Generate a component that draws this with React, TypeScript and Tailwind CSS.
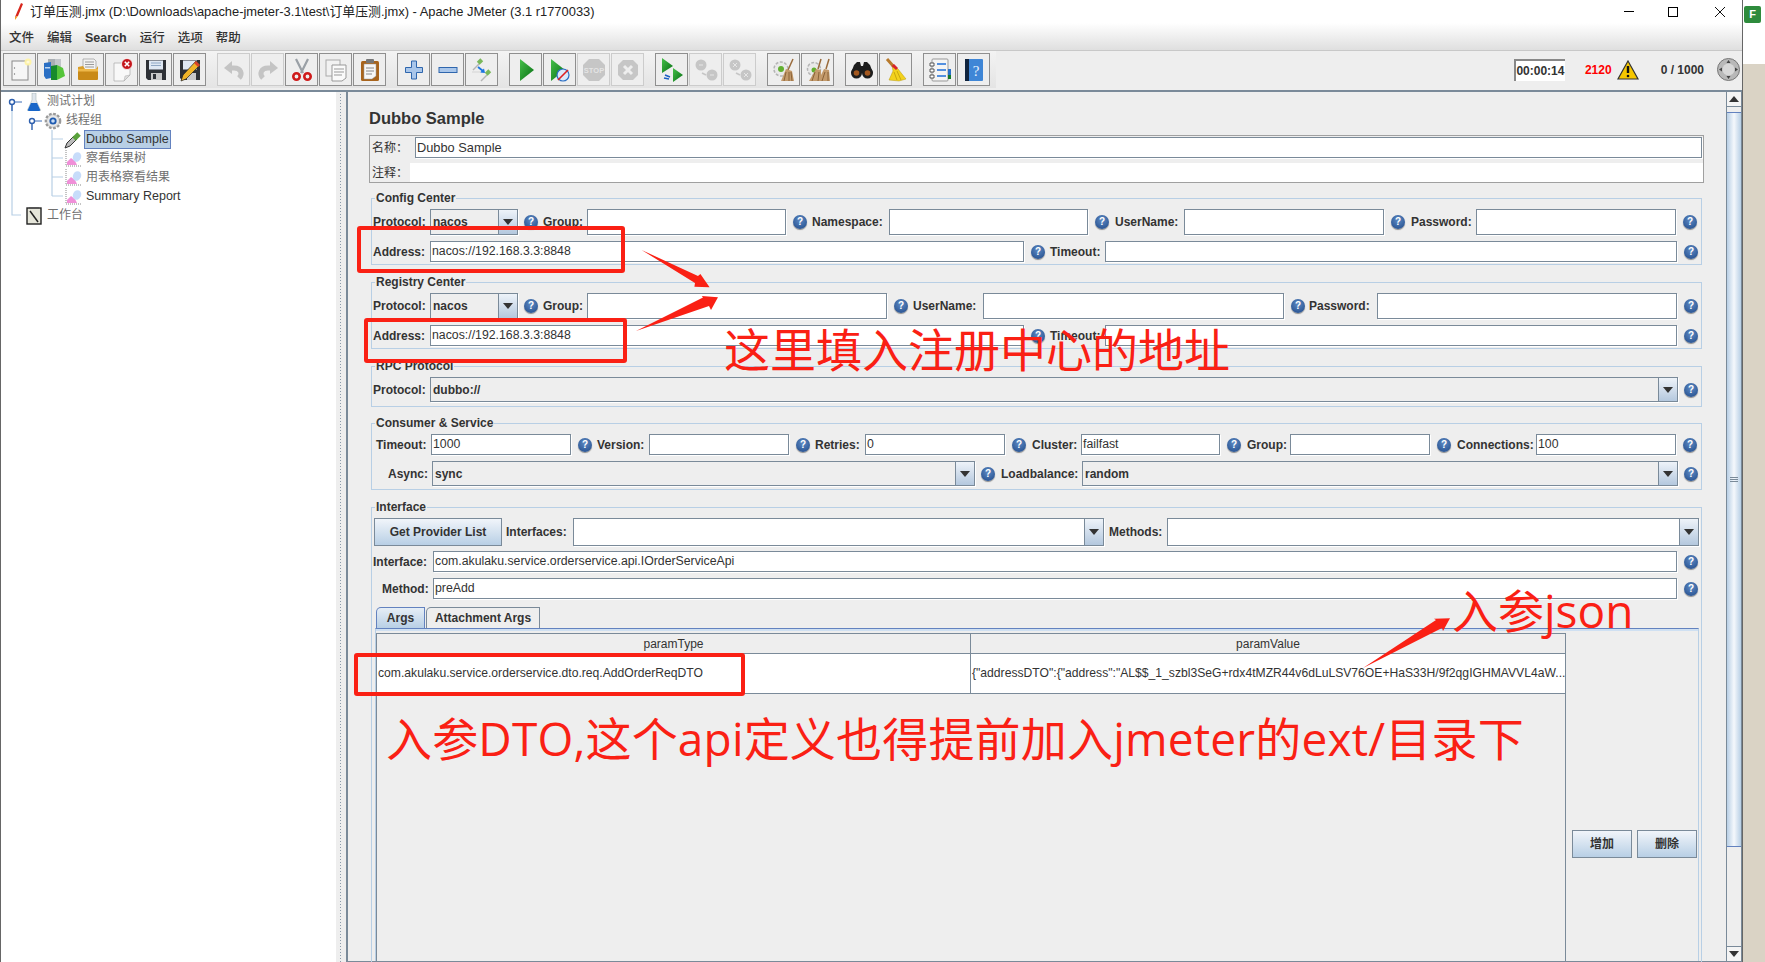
import React from "react";

const Tri = ({ up }: { up?: boolean }) => (
  <svg width="10" height="6" viewBox="0 0 10 6">
    <polygon points={up ? "0,6 10,6 5,0" : "0,0 10,0 5,6"} fill="#333" />
  </svg>
);

const Help = ({ className = "" }: { className?: string }) => (
  <span className={`flex h-[14px] w-[14px] shrink-0 items-center justify-center self-center rounded-full bg-[radial-gradient(circle_at_50%_35%,#5f8bc4,#1d4787)] text-[10px] font-bold leading-none text-white shadow-[0_1px_1px_#888] ${className}`}>
    ?
  </span>
);

const Label = ({ className = "", children }: { className?: string; children: React.ReactNode }) => (
  <span className={`shrink-0 self-center whitespace-nowrap text-[12px] font-bold text-[#333] ${className}`}>{children}</span>
);

const Field = ({ className = "", value = "" }: { className?: string; value?: string }) => (
  <div className={`flex shrink-0 items-center overflow-hidden border border-[#7a8a99] bg-white pl-[1px] text-[12.300px] text-[#333] shadow-[1px_1px_0_#fff] ${className}`}>
    {value}
  </div>
);

const Combo = ({ className = "", value = "", white }: { className?: string; value?: string; white?: boolean }) => (
  <div className={`flex shrink-0 border border-[#7a8a99] shadow-[1px_1px_0_#fff] ${white ? "bg-white" : "bg-[#eeeeee]"} ${className}`}>
    <span className="flex flex-1 items-center pl-[2px] text-[12px] font-bold text-[#333]">{value}</span>
    <span className="flex w-[19px] items-center justify-center border-l border-[#7a8a99] bg-gradient-to-b from-[#eef3f9] to-[#b4c8de]">
      <Tri />
    </span>
  </div>
);

const Group = ({ title, className = "", children }: { title: string; className?: string; children: React.ReactNode }) => (
  <div className={`relative ml-[2px] w-[1331px] border border-[#b8cfe5] ${className}`}>
    <span className="absolute -top-[8px] left-[3px] bg-[#eeeeee] px-[1px] text-[12px] font-bold leading-[14px] text-[#333]">{title}</span>
    {children}
  </div>
);

const Btn = ({ off, children }: { off?: boolean; children: React.ReactNode }) => (
  <div className={`flex h-[33px] w-[33px] items-center justify-center border bg-[#eeeeee] ${off ? "border-[#cccccc]" : "border-[#8f8f8f]"}`}>
    {children}
  </div>
);

const I = ({ children, s = 24 }: { children: React.ReactNode; s?: number }) => (
  <svg width={s} height={s} viewBox="0 0 24 24">{children}</svg>
);

const icons = {
  file: (
    <I>
      <rect x="4" y="3" width="16" height="19" fill="#f6f6f6" stroke="#8a8a8a" />
      <circle cx="20" cy="4" r="3.5" fill="#fff3a0" opacity="0.9" />
      <circle cx="20" cy="4" r="1.6" fill="#fff9d8" />
      <circle cx="6.5" cy="10" r="0.7" fill="#777" />
      <circle cx="6.5" cy="16" r="0.7" fill="#777" />
    </I>
  ),
  templates: (
    <I>
      <rect x="6" y="1" width="7" height="9" fill="#a9aeb3" />
      <rect x="13" y="1" width="6" height="9" fill="#c2c6ca" />
      <polygon points="2,5 9,4 9,20 4,21 2,18" fill="#2a6fc4" />
      <rect x="3" y="9" width="5" height="1.5" fill="#bcd6f2" />
      <polygon points="9,8 15,7 15,22 9,22" fill="#178a2c" />
      <polygon points="15,7 21,10 23,18 15,22" fill="#55c53a" />
    </I>
  ),
  open: (
    <I>
      <polygon points="7,1 18,1 20,3 20,14 7,14" fill="#f2f2f2" stroke="#999" strokeWidth="0.7" />
      <path d="M9 4h9M9 6.5h9M9 9h9" stroke="#9a9a9a" />
      <path d="M2 9l5-1 2 3h11l2-3v12a1 1 0 0 1-1 1H3a1 1 0 0 1-1-1z" fill="#d99f2b" />
      <path d="M2 13h20v8a1 1 0 0 1-1 1H3a1 1 0 0 1-1-1z" fill="#c98a18" />
      <rect x="2" y="11" width="20" height="2.5" fill="#eeb84a" />
    </I>
  ),
  close: (
    <I>
      <polygon points="4,5 20,5 20,17 14,23 4,23" fill="#f8f8f8" stroke="#aaa" strokeWidth="0.7" />
      <polygon points="14,23 15,18 20,17" fill="#ddd" stroke="#aaa" strokeWidth="0.5" />
      <circle cx="17" cy="6" r="5.5" fill="#c4161c" stroke="#fff" strokeWidth="0.8" />
      <path d="M14.8 3.8l4.4 4.4M19.2 3.8l-4.4 4.4" stroke="#fff" strokeWidth="1.6" />
    </I>
  ),
  save: (
    <I>
      <path d="M2 2h20v20H4l-2-2z" fill="#2e3136" />
      <rect x="5" y="2.5" width="14" height="9" fill="#dfe8f3" />
      <path d="M7 5h10M7 7.5h10" stroke="#8fa7c4" />
      <rect x="7" y="15" width="11" height="7" fill="#c8c8c8" />
      <rect x="9" y="16" width="3" height="5" fill="#2e3136" />
    </I>
  ),
  saveAs: (
    <I>
      <path d="M2 2h20v20H4l-2-2z" fill="#2e3136" />
      <rect x="5" y="2.5" width="14" height="9" fill="#dfe8f3" />
      <rect x="9" y="15" width="9" height="7" fill="#c8c8c8" />
      <polygon points="3,23 5,17 18,3 22,7 8,21" fill="#f0b429" stroke="#222" strokeWidth="0.7" />
      <polygon points="18,3 22,7 20,9 16,5" fill="#d8432a" />
    </I>
  ),
  undo: (
    <I>
      <path d="M17 20c4-4 2-10-5-10H8" fill="none" stroke="#c4c4c4" strokeWidth="5" />
      <polygon points="10,3 2,10 10,16" fill="#c4c4c4" />
    </I>
  ),
  redo: (
    <I>
      <path d="M7 20c-4-4-2-10 5-10h4" fill="none" stroke="#c4c4c4" strokeWidth="5" />
      <polygon points="14,3 22,10 14,16" fill="#c4c4c4" />
    </I>
  ),
  cut: (
    <I>
      <path d="M6 1l7 14M18 1l-7 14" stroke="#9aa0a6" strokeWidth="2.2" fill="none" />
      <circle cx="6.5" cy="18.500" r="3.2" fill="none" stroke="#cf1a1a" strokeWidth="2.6" />
      <circle cx="17.5" cy="18.500" r="3.2" fill="none" stroke="#cf1a1a" strokeWidth="2.6" />
    </I>
  ),
  copy: (
    <I>
      <rect x="2" y="2" width="14" height="16" fill="#f2f2f2" stroke="#aaa" />
      <polygon points="8,7 22,7 22,20 18,23 8,23" fill="#fafafa" stroke="#999" />
      <path d="M10 11h10M10 14h10M10 17h8" stroke="#999" />
    </I>
  ),
  paste: (
    <I>
      <rect x="3" y="3" width="18" height="20" rx="1.5" fill="#a8641c" />
      <polygon points="6,6 18,6 18,18 14,21 6,21" fill="#f7f7f7" stroke="#999" strokeWidth="0.5" />
      <rect x="8" y="1" width="8" height="4" rx="1" fill="#777" />
      <path d="M8 10h8M8 13h8M8 16h6" stroke="#888" />
    </I>
  ),
  plus: (
    <I>
      <path d="M9.5 3h5v6.500h6v5h-6V21h-5v-6.500h-6v-5h6z" fill="#a9c6ea" stroke="#2f66ad" strokeWidth="1" />
    </I>
  ),
  minus: (
    <I>
      <rect x="3" y="9.500" width="18" height="5" fill="#a9c6ea" stroke="#2f66ad" />
    </I>
  ),
  toggle: (
    <I>
      <path d="M3 12L9 6" stroke="#b5b5b5" strokeWidth="1.500" />
      <rect x="8" y="1" width="4" height="5" fill="#7ab85c" transform="rotate(45 10 3.500)" />
      <path d="M11 23l6-6" stroke="#b5b5b5" strokeWidth="1.500" />
      <rect x="16" y="12" width="4" height="5" fill="#7ab85c" transform="rotate(45 18 14.500)" />
      <path d="M8 9l5 4" stroke="#1b74e0" strokeWidth="1.800" />
      <polygon points="15,15 10,14.500 14,10.500" fill="#1b74e0" />
      <path d="M2 14h9" stroke="#d4d4d4" />
    </I>
  ),
  play: (
    <I>
      <defs>
        <linearGradient id="pg" x1="0" y1="0" x2="1" y2="1">
          <stop offset="0" stopColor="#46c04a" />
          <stop offset="1" stopColor="#066d12" />
        </linearGradient>
      </defs>
      <polygon points="6,1 20,12 6,23" fill="url(#pg)" />
    </I>
  ),
  playNo: (
    <I>
      <polygon points="3,1 17,12 3,23" fill="url(#pg)" />
      <circle cx="15" cy="17" r="6" fill="#dbe8f8" stroke="#2a6fc4" strokeWidth="1.2" />
      <path d="M10 22L20 12" stroke="#e02020" strokeWidth="1.6" />
    </I>
  ),
  stop: (
    <I>
      <polygon points="7,1 17,1 23,7 23,17 17,23 7,23 1,17 1,7" fill="#c6c6c6" />
      <text x="12" y="15" textAnchor="middle" fontSize="7.500" fontWeight="700" fill="#e4e4e4" fontFamily="Liberation Sans">STOP</text>
    </I>
  ),
  down: (
    <I>
      <polygon points="7,2 17,2 22,7 22,17 17,22 7,22 2,17 2,7" fill="#c6c6c6" />
      <path d="M8 8l8 8M16 8l-8 8" stroke="#eeeeee" strokeWidth="3" />
    </I>
  ),
  remote: (
    <I>
      <polygon points="2,0 13,8 2,15" fill="url(#pg)" />
      <polygon points="13,10 23,17 13,24" fill="url(#pg)" />
      <path d="M5 17l5 2M9 21l-5-1" stroke="#1b5fc4" strokeWidth="1.6" />
    </I>
  ),
  remoteStop: (
    <I>
      <circle cx="7" cy="7" r="5.500" fill="#c6c6c6" />
      <circle cx="18" cy="17" r="5.500" fill="#c6c6c6" />
      <path d="M8 15l4 2" stroke="#c6c6c6" strokeWidth="1.600" />
      <path d="M5 7h4M16 17h4" stroke="#e6e6e6" />
    </I>
  ),
  remoteDown: (
    <I>
      <circle cx="7" cy="7" r="5.500" fill="#c6c6c6" />
      <circle cx="18" cy="17" r="5.500" fill="#c6c6c6" />
      <path d="M8 15l4 2" stroke="#c6c6c6" strokeWidth="1.600" />
      <path d="M5 5l4 4M9 5l-4 4M16 15l4 4M20 15l-4 4" stroke="#e6e6e6" />
    </I>
  ),
  clear: (
    <I>
      <circle cx="9" cy="11" r="7" fill="#e9e9e9" stroke="#b5b5b5" strokeWidth="1.500" strokeDasharray="3 1.500" />
      <circle cx="9" cy="11" r="3" fill="#62b030" />
      <path d="M21 1l-5 11" stroke="#9a6b3c" strokeWidth="1.500" />
      <polygon points="14,11 20,13 22,23 9,23" fill="#c39a6b" />
      <path d="M14 14l-2 9M17 14l0 9M19 14l1 9" stroke="#8a6238" />
    </I>
  ),
  clearAll: (
    <I>
      <circle cx="8" cy="11" r="6.500" fill="#e9e9e9" stroke="#b5b5b5" strokeWidth="1.500" strokeDasharray="3 1.500" />
      <circle cx="8" cy="12" r="2.500" fill="#62b030" />
      <path d="M15 1l-3 10M23 1l-3 10" stroke="#9a6b3c" strokeWidth="1.500" />
      <polygon points="10,11 15,12 15,23 3,23" fill="#c39a6b" />
      <polygon points="18,11 23,12 24,23 12,23" fill="#c39a6b" />
      <path d="M9 14l-3 9M13 14l-1 9M19 14l-3 9M22 14l0 9" stroke="#8a6238" />
    </I>
  ),
  search: (
    <I>
      <path d="M4 7l3-3h3l1 4h2l1-4h3l3 3 3 8H1z" fill="#1e1e1e" />
      <circle cx="6.500" cy="15" r="5.500" fill="#1e1e1e" />
      <circle cx="17.500" cy="15" r="5.500" fill="#1e1e1e" />
      <circle cx="6.500" cy="15" r="2.800" fill="#a4581f" />
      <circle cx="17.500" cy="15" r="2.800" fill="#a4581f" />
    </I>
  ),
  broom: (
    <I>
      <path d="M3 1l7 8" stroke="#b87a2c" strokeWidth="3" />
      <polygon points="8,7 14,11 22,21 15,23 5,22 9,13" fill="#f3d21c" stroke="#b99a10" strokeWidth="0.500" />
      <polygon points="7.500,8 10,6 14,10 12,12" fill="#d8242a" />
      <path d="M10 14l3 8M13 13l4 9" stroke="#c9a80e" />
    </I>
  ),
  fnList: (
    <I>
      <rect x="4" y="1" width="16" height="22" rx="1" fill="#f4f4f4" stroke="#999" />
      <path d="M9 6h9M9 12h9M9 18h9" stroke="#1f6fd8" strokeWidth="1.300" />
      <path d="M2 5h4v3H2zM2 11h4v3H2zM2 17h4v3H2z" fill="#fff" stroke="#333" strokeWidth="0.800" />
      <rect x="20" y="11" width="3" height="6" fill="#2a70c8" />
      <rect x="20" y="17" width="3" height="4" fill="#157a2a" />
    </I>
  ),
  book: (
    <I>
      <rect x="3" y="1" width="18" height="22" rx="1" fill="#3f86d6" />
      <rect x="3" y="1" width="4" height="22" fill="#10243e" />
      <text x="14" y="18" textAnchor="middle" fontSize="15" fill="#e8f2ff" fontFamily="Liberation Serif">?</text>
    </I>
  ),
};

const toolbar: { off?: boolean; icon: keyof typeof icons }[][] = [
  [{ icon: "file" }, { icon: "templates" }, { icon: "open" }, { icon: "close" }, { icon: "save" }, { icon: "saveAs" }],
  [{ icon: "undo", off: true }, { icon: "redo", off: true }, { icon: "cut" }, { icon: "copy" }, { icon: "paste" }],
  [{ icon: "plus" }, { icon: "minus" }, { icon: "toggle" }],
  [{ icon: "play" }, { icon: "playNo" }, { icon: "stop", off: true }, { icon: "down", off: true }],
  [{ icon: "remote" }, { icon: "remoteStop", off: true }, { icon: "remoteDown", off: true }],
  [{ icon: "clear" }, { icon: "clearAll" }],
  [{ icon: "search" }, { icon: "broom" }],
  [{ icon: "fnList" }, { icon: "book" }],
];

const Flask = () => (
  <svg width="16" height="18" viewBox="0 0 16 18">
    <path d="M6 0h4v7l4 9a1 1 0 0 1-1 2H3a1 1 0 0 1-1-2l4-9z" fill="#dfe6ee" stroke="#9aa" strokeWidth="0.500" />
    <path d="M5 10h6l3 6.500a1 1 0 0 1-1 1.500H3a1 1 0 0 1-1-1.500z" fill="#1866c9" />
  </svg>
);

const Gear = () => (
  <svg width="20" height="20" viewBox="0 0 20 20">
    <circle cx="10" cy="10" r="8" fill="#d8d8d8" stroke="#9a9a9a" strokeWidth="2.500" strokeDasharray="3 1.700" />
    <circle cx="10" cy="10" r="6" fill="#e8e8e8" />
    <circle cx="10" cy="10" r="4" fill="#1f5bb0" />
    <circle cx="10" cy="10" r="2" fill="#c7dcf5" />
  </svg>
);

const Pipette = () => (
  <svg width="18" height="18" viewBox="0 0 18 18">
    <path d="M1 17l2-5 7-7 3 3-7 7z" fill="#bbb" stroke="#333" />
    <path d="M10 8l5-5" stroke="#5aa23c" strokeWidth="5" />
  </svg>
);

const Graph = () => (
  <svg width="17" height="17" viewBox="0 0 17 17">
    <path d="M1 0v16h16" fill="none" stroke="#888" strokeDasharray="1 1" />
    <path d="M2 15l0-3 4-4 4 3 2 4z" fill="#f08fd8" />
    <ellipse cx="12" cy="7" rx="4" ry="5" fill="#c7dcfa" transform="rotate(25 12 7)" />
  </svg>
);

const Note = () => (
  <svg width="18" height="18" viewBox="0 0 18 18">
    <rect x="2" y="1" width="14" height="16" fill="#e6e6da" stroke="#222" strokeWidth="1.400" />
    <path d="M5 4l8 11" stroke="#222" strokeWidth="1.500" />
    <path d="M4 1h10" stroke="#555" strokeWidth="2" />
  </svg>
);

const TreeRow = ({ pad, icon, text, size = "text-[12px]", color = "text-[#707070]", selected }: { pad: string; icon: React.ReactNode; text: string; size?: string; color?: string; selected?: boolean }) => (
  <div className={`flex h-[19px] items-center ${pad}`}>
    <span className="mr-[2px] flex w-[18px] justify-center">{icon}</span>
    <span className={`whitespace-nowrap leading-[17px] ${size} ${color} ${selected ? "border border-[#6382bf] bg-[#b8cfe5] px-[1px]" : "pl-[2px]"}`}>{text}</span>
  </div>
);

const Annotations = () => (
  <>
    <div className="absolute left-[357px] top-[226px] h-[47px] w-[268px] rounded-[3px] border-[4px] border-[#fa2014]" />
    <div className="absolute left-[364px] top-[318px] h-[45px] w-[263px] rounded-[3px] border-[4px] border-[#fa2014]" />
    <div className="absolute left-[354px] top-[653px] h-[43px] w-[391px] rounded-[3px] border-[4px] border-[#fa2014]" />
    <svg className="absolute left-0 top-0" width="1765" height="962">
      <polygon points="641.600,250 698,276 700.400,274 709.600,287.300 694.400,286.700 695,283" fill="#fa2014" />
      <polygon points="636,331 703,297.500 701.800,296 718,297.300 711,310 709,306" fill="#fa2014" />
      <polygon points="1363,668 1436,620 1434,618.700 1450,618.300 1443,631 1442,628" fill="#fa2014" />
    </svg>
    <span className="absolute left-[724px] top-[318px] whitespace-nowrap text-[46px] leading-[66px] text-[#fa2014]">这里填入注册中心的地址</span>
    <span className="absolute left-[386px] top-[705px] whitespace-nowrap font-['Open_Sans','Noto_Sans_CJK_SC',sans-serif] text-[46px] leading-[66px] tracking-[0.18px] text-[#fa2014]">入参DTO,这个api定义也得提前加入jmeter的ext/目录下</span>
    <span className="absolute left-[1452px] top-[577px] whitespace-nowrap font-['Open_Sans','Noto_Sans_CJK_SC',sans-serif] text-[46px] leading-[66px] text-[#fa2014]">入参json</span>
  </>
);

export default function App() {
  return (
    <div className="relative flex h-[962px] w-[1765px] overflow-hidden bg-white font-['Liberation_Sans','Noto_Sans_CJK_SC',sans-serif]">
      <div className="flex h-full w-[1743px] flex-col border-x border-[#666]">
        {/* title */}
        <div className="flex h-[23px] shrink-0 items-center bg-white pl-[11px] text-[12.900px] text-[#222]">
          <svg width="12" height="18" viewBox="0 0 12 18" className="mr-[6px]">
            <path d="M9 0l2 1-5 12-3 1z" fill="#d8261c" />
            <path d="M3 14l3-1-3 4z" fill="#f0a020" />
          </svg>
          <span>订单压测.jmx (D:\Downloads\apache-jmeter-3.1\test\订单压测.jmx) - Apache JMeter (3.1 r1770033)</span>
          <div className="ml-auto flex items-center">
            <span className="mr-[34px] h-[1px] w-[10px] bg-black" />
            <span className="mr-[36px] h-[10px] w-[10px] border border-black" />
            <svg width="12" height="12" viewBox="0 0 12 12" className="mr-[16px]">
              <path d="M1 1l10 10M11 1L1 11" stroke="#111" />
            </svg>
          </div>
        </div>
        {/* menu */}
        <div className="flex h-[28px] shrink-0 items-center gap-[13px] border-b border-[#c8c8c8] bg-gradient-to-b from-white to-[#dfdfdf] pl-[8px] pt-[3px] text-[12.500px] font-medium text-[#333]">
          <span>文件</span>
          <span>编辑</span>
          <span className="font-bold">Search</span>
          <span>运行</span>
          <span>选项</span>
          <span>帮助</span>
        </div>
        {/* toolbar */}
        <div className="flex h-[41px] shrink-0 items-center border-b-2 border-[#7a8a99] bg-[#eeeeee] pb-[2px] pl-[2px]">
          <div className="flex h-[37px] items-center gap-[11px] bg-gradient-to-b from-[#f3f3f3] to-[#e4e4e4] pr-[6px]">
            {toolbar.map((g, i) => (
              <div key={i} className="flex gap-[1px]">
                {g.map(b => (
                  <Btn key={b.icon} off={b.off}>{icons[b.icon]}</Btn>
                ))}
              </div>
            ))}
          </div>
          <div className="ml-auto flex items-center text-[12px] font-bold text-[#333]">
            <span className="mr-[20px] flex h-[22px] w-[51px] items-center justify-center border-l-2 border-t-2 border-[#888] bg-white">00:00:14</span>
            <span className="mr-[5px] text-[#ff0000]">2120</span>
            <svg width="22" height="20" viewBox="0 0 22 20" className="mr-[22px]">
              <polygon points="11,1 21,19 1,19" fill="#f6c700" stroke="#333" strokeWidth="1.200" />
              <path d="M11 6v7" stroke="#111" strokeWidth="2.400" />
              <circle cx="11" cy="16" r="1.300" fill="#111" />
            </svg>
            <span className="mr-[13px]">0 / 1000</span>
            <svg width="23" height="23" viewBox="0 0 23 23" className="mr-[2px]">
              <circle cx="11.500" cy="11.500" r="11" fill="#b8b8b8" stroke="#777" />
              <circle cx="11.500" cy="11.500" r="6" fill="#d8d8d8" />
              <path d="M11.500 2l2 3h-4zM11.500 21l2-3h-4zM2 11.500l3-2v4zM21 11.500l-3-2v4z" fill="#444" />
            </svg>
          </div>
        </div>
        <div className="flex min-h-0 flex-1">
          {/* tree */}
          <div className="relative w-[335px] shrink-0 bg-white pl-[1px]">
            <svg className="absolute left-0 top-0" width="70" height="130">
              <path d="M11 10v113h9M51 38v66M51 47h11M51 66h11M51 85h11M51 104h11" fill="none" stroke="#b8cfe5" strokeWidth="1.200" />
              <path d="M11 10h10M31 29h10" stroke="#3d6cb5" />
              <circle cx="11" cy="10" r="2.500" fill="#fff" stroke="#2d5fae" strokeWidth="1.400" />
              <path d="M11 13v6" stroke="#2d5fae" strokeWidth="1.400" />
              <circle cx="31" cy="29" r="2.500" fill="#fff" stroke="#2d5fae" strokeWidth="1.400" />
              <path d="M31 32v6" stroke="#2d5fae" strokeWidth="1.400" />
            </svg>
            <TreeRow pad="pl-[23px]" icon={<Flask />} text="测试计划" />
            <TreeRow pad="pl-[42px]" icon={<Gear />} text="线程组" />
            <TreeRow pad="pl-[62px]" icon={<Pipette />} text="Dubbo Sample" size="text-[12.500px]" color="text-[#333]" selected />
            <TreeRow pad="pl-[62px]" icon={<Graph />} text="察看结果树" />
            <TreeRow pad="pl-[62px]" icon={<Graph />} text="用表格察看结果" />
            <TreeRow pad="pl-[62px]" icon={<Graph />} text="Summary Report" size="text-[12.500px]" color="text-[#333]" />
            <TreeRow pad="pl-[23px]" icon={<Note />} text="工作台" />
          </div>
          {/* splitter */}
          <div className="flex w-[10px] shrink-0 justify-center bg-[#eeeeee]">
            <div className="mt-[1px] w-[4px] bg-[radial-gradient(#8a9aaa_1px,transparent_1px)] bg-[length:3px_3px]" />
          </div>
          {/* right pane */}
          <div className="flex min-w-0 flex-1 border-b border-l-2 border-[#7a8a99] bg-[#eeeeee]">
            <div className="w-[1378px] shrink-0 pl-[21px]">
              <div className="flex h-[43px] items-end pb-[6px] text-[16.500px] font-bold leading-[22px] text-[#333]">Dubbo Sample</div>
              <div className="w-[1335px] border border-[#a0a0a0] pt-[1px]">
                <div className="flex h-[21px]">
                  <Label className="ml-[2px] w-[43px] font-normal">名称：</Label>
                  <Field className="w-[1287px] text-[12.800px]" value="Dubbo Sample" />
                </div>
                <div className="mt-[5px] flex h-[19px]">
                  <Label className="ml-[2px] w-[38px] font-normal">注释：</Label>
                  <div className="flex-1 bg-white" />
                </div>
              </div>

              <Group title="Config Center" className="mt-[15px] h-[67px] pl-[1px] pt-[10px]">
                <div className="flex h-[26px]">
                  <Label className="w-[57px]">Protocol:</Label>
                  <Combo className="w-[88px]" value="nacos" />
                  <Help className="ml-[6px]" />
                  <Label className="ml-[5px] w-[38px]">Group:</Label>
                  <Field className="ml-[6px] w-[199px]" />
                  <Help className="ml-[7px]" />
                  <Label className="ml-[5px] w-[72px]">Namespace:</Label>
                  <Field className="ml-[5px] w-[199px]" />
                  <Help className="ml-[7px]" />
                  <Label className="ml-[6px] w-[64px]">UserName:</Label>
                  <Field className="ml-[5px] w-[200px]" />
                  <Help className="ml-[7px]" />
                  <Label className="ml-[6px] w-[60px]">Password:</Label>
                  <Field className="ml-[5px] w-[200px]" />
                  <Help className="ml-[7px]" />
                </div>
                <div className="mt-[6px] flex h-[21px]">
                  <Label className="w-[57px]">Address:</Label>
                  <Field className="w-[594px]" value="nacos://192.168.3.3:8848" />
                  <Help className="ml-[7px]" />
                  <Label className="ml-[5px] w-[50px]">Timeout:</Label>
                  <Field className="ml-[5px] w-[572px]" />
                  <Help className="ml-[7px]" />
                </div>
              </Group>

              <Group title="Registry Center" className="mt-[17px] h-[67px] pl-[1px] pt-[10px]">
                <div className="flex h-[26px]">
                  <Label className="w-[57px]">Protocol:</Label>
                  <Combo className="w-[88px]" value="nacos" />
                  <Help className="ml-[6px]" />
                  <Label className="ml-[5px] w-[38px]">Group:</Label>
                  <Field className="ml-[6px] w-[300px]" />
                  <Help className="ml-[7px]" />
                  <Label className="ml-[5px] w-[64px]">UserName:</Label>
                  <Field className="ml-[6px] w-[301px]" />
                  <Help className="ml-[7px]" />
                  <Label className="ml-[4px] w-[62px]">Password:</Label>
                  <Field className="ml-[6px] w-[300px]" />
                  <Help className="ml-[7px]" />
                </div>
                <div className="mt-[6px] flex h-[21px]">
                  <Label className="w-[57px]">Address:</Label>
                  <Field className="w-[594px]" value="nacos://192.168.3.3:8848" />
                  <Help className="ml-[7px]" />
                  <Label className="ml-[5px] w-[50px]">Timeout:</Label>
                  <Field className="ml-[5px] w-[572px]" />
                  <Help className="ml-[7px]" />
                </div>
              </Group>

              <Group title="RPC Protocol" className="mt-[17px] h-[41px] pl-[1px] pt-[10px]">
                <div className="flex h-[25px]">
                  <Label className="w-[57px]">Protocol:</Label>
                  <Combo className="w-[1248px]" value="dubbo://" />
                  <Help className="ml-[6px]" />
                </div>
              </Group>

              <Group title="Consumer & Service" className="mt-[16px] h-[67px] pl-[1px] pt-[10px]">
                <div className="flex h-[21px]">
                  <Label className="ml-[3px] w-[55px]">Timeout:</Label>
                  <Field className="w-[140px]" value="1000" />
                  <Help className="ml-[7px]" />
                  <Label className="ml-[5px] w-[52px]">Version:</Label>
                  <Field className="w-[140px]" />
                  <Help className="ml-[7px]" />
                  <Label className="ml-[5px] w-[50px]">Retries:</Label>
                  <Field className="w-[140px]" value="0" />
                  <Help className="ml-[7px]" />
                  <Label className="ml-[6px] w-[49px]">Cluster:</Label>
                  <Field className="w-[139px]" value="failfast" />
                  <Help className="ml-[7px]" />
                  <Label className="ml-[6px] w-[43px]">Group:</Label>
                  <Field className="w-[140px]" />
                  <Help className="ml-[7px]" />
                  <Label className="ml-[6px] w-[79px]">Connections:</Label>
                  <Field className="w-[140px]" value="100" />
                  <Help className="ml-[7px]" />
                </div>
                <div className="mt-[6px] flex h-[25px]">
                  <Label className="ml-[15px] w-[44px]">Async:</Label>
                  <Combo className="w-[543px]" value="sync" />
                  <Help className="ml-[6px]" />
                  <Label className="ml-[6px] w-[81px]">Loadbalance:</Label>
                  <Combo className="w-[596px]" value="random" />
                  <Help className="ml-[6px]" />
                </div>
              </Group>

              <Group title="Interface" className="mt-[17px] h-[455px] border-b-0 pl-[1px] pt-[10px]">
                <div className="flex h-[28px]">
                  <div className="ml-[1px] flex w-[128px] shrink-0 items-center justify-center border border-[#7a8a99] bg-gradient-to-b from-[#f1f5fa] to-[#b8cfe5] text-[12px] font-bold text-[#333]">
                    Get Provider List
                  </div>
                  <Label className="ml-[4px] w-[67px]">Interfaces:</Label>
                  <Combo white className="w-[531px]" />
                  <Label className="ml-[5px] w-[58px]">Methods:</Label>
                  <Combo white className="w-[532px]" />
                </div>
                <div className="mt-[5px] flex h-[21px]">
                  <Label className="w-[60px]">Interface:</Label>
                  <Field className="w-[1244px] text-[12.200px]" value="com.akulaku.service.orderservice.api.IOrderServiceApi" />
                  <Help className="ml-[7px]" />
                </div>
                <div className="mt-[6px] flex h-[21px]">
                  <Label className="ml-[9px] w-[51px]">Method:</Label>
                  <Field className="w-[1244px]" value="preAdd" />
                  <Help className="ml-[7px]" />
                </div>
                {/* tabs */}
                <div className="mt-[8px] flex h-[21px] pl-[3px]">
                  <div className="flex w-[49px] items-center justify-center rounded-tl-[5px] border border-b-0 border-[#6382bf] bg-gradient-to-b from-[#e6eef6] to-[#b8cfe5] text-[12px] font-bold text-[#333]">Args</div>
                  <div className="ml-[1px] flex w-[114px] items-center justify-center rounded-tl-[5px] border border-b-0 border-[#7a8a99] text-[12px] font-bold text-[#333]">Attachment Args</div>
                </div>
                <div className="ml-[2px] flex h-[333px] w-[1324px] border-x border-t border-x-[#b8cfe5] border-t-[#6382bf] shadow-[inset_0_2px_0_#cfe0f2]">
                  <div className="mt-[4px] w-[1190px] shrink-0 border-x border-[#7a8a99]">
                    <div className="flex h-[21px] border-b border-t border-[#7a8a99] bg-[#eeeeee] text-[12px] text-[#333]">
                      <span className="flex w-[594px] items-center justify-center border-r border-[#7a8a99]">paramType</span>
                      <span className="flex flex-1 items-center justify-center">paramValue</span>
                    </div>
                    <div className="flex h-[40px] border-b border-[#7a8a99] bg-white text-[12.150px] text-[#333]">
                      <span className="flex w-[594px] items-center border-r border-[#7a8a99] pl-[1px]">com.akulaku.service.orderservice.dto.req.AddOrderReqDTO</span>
                      <span className="flex min-w-0 flex-1 items-center overflow-hidden whitespace-nowrap pl-[1px]">{'{"addressDTO":{"address":"AL$$_1_szbl3SeG+rdx4tMZR44v6dLuLSV76OE+HaS33H/9f2qgIGHMAVVL4aW...'}</span>
                    </div>
                  </div>
                  <div className="flex flex-1 items-start gap-[5px] pl-[6px] pt-[201px]">
                    <div className="flex h-[28px] w-[60px] items-center justify-center border border-[#7a8a99] bg-gradient-to-b from-[#f1f5fa] to-[#b8cfe5] text-[12px] font-bold text-[#333]">增加</div>
                    <div className="flex h-[28px] w-[60px] items-center justify-center border border-[#7a8a99] bg-gradient-to-b from-[#f1f5fa] to-[#b8cfe5] text-[12px] font-bold text-[#333]">删除</div>
                  </div>
                </div>
              </Group>
            </div>
            {/* scrollbar */}
            <div className="flex w-[16px] shrink-0 flex-col border-x border-[#7a8a99]">
              <div className="flex h-[15px] items-center justify-center border-b border-[#7a8a99] bg-[#f4f4f4]"><Tri up /></div>
              <div className="mt-[5px] flex h-[735px] flex-col items-center justify-center gap-[1px] border-y border-[#6382bf] bg-gradient-to-r from-[#b8cfe5] via-[#f5f8fc] to-[#b8cfe5]">
                <span className="h-[1px] w-[8px] bg-[#7a8a99]" />
                <span className="h-[1px] w-[8px] bg-[#7a8a99]" />
                <span className="h-[1px] w-[8px] bg-[#7a8a99]" />
              </div>
              <div className="flex-1" />
              <div className="flex h-[15px] items-center justify-center border-t border-[#7a8a99] bg-[#f4f4f4]"><Tri /></div>
            </div>
          </div>
        </div>
      </div>
      {/* desktop behind the window */}
      <div className="flex w-[22px] flex-col">
        <div className="h-[64px] bg-white pl-[1px] pt-[6px]">
          <div className="flex h-[17px] w-[17px] items-center justify-center rounded-[2px] bg-[#2e8b3c] text-[11px] font-bold text-white">F</div>
        </div>
        <div className="flex-1 bg-[#dad3c5]" />
      </div>
      <Annotations />
    </div>
  );
}
